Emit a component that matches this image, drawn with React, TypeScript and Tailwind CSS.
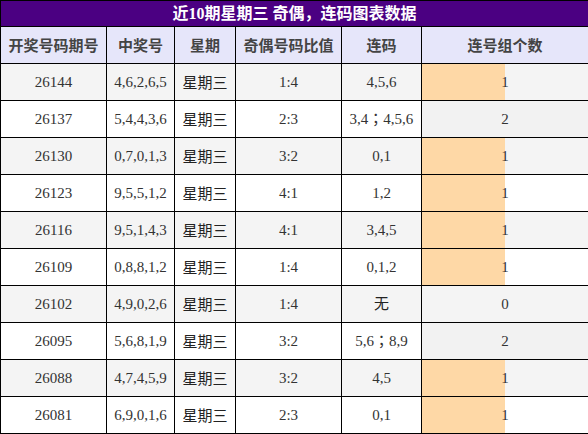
const rows = [
  { no: '26144', nums: '4,6,2,6,5', oe: '1:4', lian: '4,5,6', cnt: 1 },
  { no: '26137', nums: '5,4,4,3,6', oe: '2:3', lian: '3,4；4,5,6', cnt: 2 },
  { no: '26130', nums: '0,7,0,1,3', oe: '3:2', lian: '0,1', cnt: 1 },
  { no: '26123', nums: '9,5,5,1,2', oe: '4:1', lian: '1,2', cnt: 1 },
  { no: '26116', nums: '9,5,1,4,3', oe: '4:1', lian: '3,4,5', cnt: 1 },
  { no: '26109', nums: '0,8,8,1,2', oe: '1:4', lian: '0,1,2', cnt: 1 },
  { no: '26102', nums: '4,9,0,2,6', oe: '1:4', lian: '无', cnt: 0 },
  { no: '26095', nums: '5,6,8,1,9', oe: '3:2', lian: '5,6；8,9', cnt: 2 },
  { no: '26088', nums: '4,7,4,5,9', oe: '3:2', lian: '4,5', cnt: 1 },
  { no: '26081', nums: '6,9,0,1,6', oe: '2:3', lian: '0,1', cnt: 1 },
];

const headers = ['开奖号码期号', '中奖号', '星期', '奇偶号码比值', '连码', '连号组个数'];

export default function App() {
  return (
    <div className="w-[588px] h-[434px] bg-white font-['Liberation_Serif','Noto_Sans_CJK_SC',serif]">
      <table className="w-[588px] table-fixed border-collapse border border-black">
        <colgroup>
          <col className="w-[106px]" />
          <col className="w-[68px]" />
          <col className="w-[61px]" />
          <col className="w-[106px]" />
          <col className="w-[80px]" />
          <col className="w-[167px]" />
        </colgroup>
        <thead>
          <tr>
            <th colSpan={6} className="h-[26px] p-0 bg-[#4b0082] border border-black text-white text-[16px] font-bold font-['Liberation_Serif','Noto_Sans_CJK_SC',serif] leading-[24px]">
              近10期星期三 奇偶，连码图表数据
            </th>
          </tr>
          <tr>
            {headers.map((h) => (
              <th key={h} className="h-[37px] p-0 bg-[#e6e6fa] border border-black text-[15px] font-bold text-[#444] font-['Noto_Sans_CJK_SC',sans-serif]">
                {h}
              </th>
            ))}
          </tr>
        </thead>
        <tbody>
          {rows.map((r, i) => (
            <tr key={r.no} className={i % 2 === 0 ? 'bg-[#f4f4f4]' : 'bg-white'}>
              <td className="h-[37px] p-0 border border-black text-center text-[15px] text-[#333]">{r.no}</td>
              <td className="p-0 border border-black text-center text-[15px] text-[#333]">{r.nums}</td>
              <td className="p-0 border border-black text-center text-[15px] text-[#222] font-['Noto_Sans_CJK_SC',sans-serif]">星期三</td>
              <td className="p-0 border border-black text-center text-[15px] text-[#333]">{r.oe}</td>
              <td className="p-0 border border-black text-center text-[15px] text-[#333] font-['Liberation_Serif','Noto_Sans_CJK_TC',serif]">
                {r.lian === '无' ? <span className="font-['Noto_Sans_CJK_SC',sans-serif] text-[#222]">无</span> : r.lian}
              </td>
              <td className="relative p-0 border border-black text-center text-[15px] text-[#333]">
                {r.cnt > 0 && (
                  <div
                    className={r.cnt === 1 ? 'absolute left-0 top-0 bottom-0 bg-[#fed8a6]' : 'absolute left-0 top-0 bottom-0 bg-[#f2f2f2]'}
                    style={{ width: `${r.cnt * 50}%` }}
                  />
                )}
                <span className="relative">{r.cnt}</span>
              </td>
            </tr>
          ))}
        </tbody>
      </table>
    </div>
  );
}
